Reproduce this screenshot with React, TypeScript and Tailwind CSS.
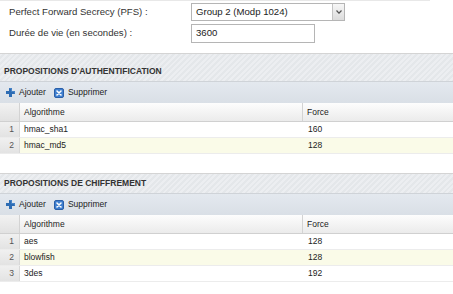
import React from 'react'

type Row = { algo: string; force: string }

const AUTH_ROWS: Row[] = [
  { algo: 'hmac_sha1', force: '160' },
  { algo: 'hmac_md5', force: '128' },
]

const CIPHER_ROWS: Row[] = [
  { algo: 'aes', force: '128' },
  { algo: 'blowfish', force: '128' },
  { algo: '3des', force: '192' },
]

function PlusIcon() {
  return (
    <svg width="9" height="9" viewBox="0 0 9 9">
      <path d="M3 0h3v3h3v3H6v3H3V6H0V3h3z" fill="#2e6db4" />
      <path d="M3.5 0.5h2v3h3v2" fill="none" stroke="#5b93d3" strokeWidth="0.6" />
    </svg>
  )
}

function DeleteIcon() {
  return (
    <svg width="10" height="10" viewBox="0 0 10 10">
      <rect x="0.5" y="0.5" width="9" height="9" rx="1.5" fill="#3f7fcf" stroke="#2a5fa8" />
      <path d="M3 3l4 4M7 3l-4 4" stroke="#fff" strokeWidth="1.6" strokeLinecap="round" />
    </svg>
  )
}

function Section({ title, rows, first }: { title: string; rows: Row[]; first?: boolean }) {
  return (
    <div className="w-full">
      {/* titre rayé */}
      <div
        className={`border-t border-b border-t-[#d4d4d4] border-b-[#cfd3d8] bg-[repeating-linear-gradient(135deg,#eceef1_0px,#eceef1_2px,#e4e7ea_2px,#e4e7ea_4px)] pl-[4px] text-[8.5px] font-bold leading-[12px] text-[#333] ${first ? 'h-[29px] pt-[11px]' : 'h-[21px] pt-[3px]'}`}
      >
        {title}
      </div>

      {/* barre d'outils */}
      <div className="flex h-[21px] items-center bg-gradient-to-b from-[#e4e9ef] to-[#d9dfe6] pl-[6px] text-[8.5px] text-[#222]">
        <span className="flex items-center gap-[4px]">
          <PlusIcon />
          Ajouter
        </span>
        <span className="ml-[8px] flex items-center gap-[4px]">
          <DeleteIcon />
          Supprimer
        </span>
      </div>

      {/* grille */}
      <div className="text-[8.5px] text-[#222]">
        <div className="flex h-[19px] border-b border-[#d0d0d0] bg-gradient-to-b from-[#fdfdfd] to-[#ebebeb]">
          <div className="w-[20px] border-r border-[#d3d3d3] bg-gradient-to-b from-[#f2f2f2] to-[#e2e2e2]" />
          <div className="flex w-[283px] items-center border-r border-[#d3d3d3] pl-[4px]">Algorithme</div>
          <div className="flex flex-1 items-center pl-[4px]">Force</div>
        </div>
        {rows.map((r, i) => (
          <div
            key={r.algo}
            className={`flex h-[16px] border-b border-[#ececec] ${i % 2 === 1 ? 'bg-[#fafbe8]' : 'bg-white'}`}
          >
            <div className="flex w-[20px] items-center justify-end border-r border-[#d8d8d8] bg-gradient-to-b from-[#f0f0f0] to-[#e3e3e3] pr-[5px] text-[#555]">
              {i + 1}
            </div>
            <div className="flex w-[283px] items-center pl-[4px]">{r.algo}</div>
            <div className="flex flex-1 items-center pl-[5px]">{r.force}</div>
          </div>
        ))}
      </div>
    </div>
  )
}

export default function App() {
  return (
    <div className="h-[294px] w-[453px] overflow-hidden bg-white font-['Liberation_Sans',Arial,sans-serif]">
      <div className="h-px w-[430px] bg-[#e8e8e8]" />

      {/* paramètres */}
      <div className="mt-[2px] flex flex-col gap-[3px] text-[9.6px] text-[#333]">
        <div className="flex items-center">
          <div className="w-[191px] pl-[9px]">Perfect Forward Secrecy (PFS) :</div>
          <div className="flex h-[18px] w-[154px] items-stretch border border-[#b5b5b5] bg-white">
            <div className="flex flex-1 items-center pl-[4px] text-[#222]">Group 2 (Modp 1024)</div>
            <div className="flex w-[12px] items-center justify-center border-l border-[#c4c4c4] bg-gradient-to-b from-[#f7f7f7] to-[#dcdcdc]">
              <svg width="6" height="4" viewBox="0 0 6 4">
                <path d="M0.5 0.5L3 3.2 5.5 0.5" fill="none" stroke="#555" strokeWidth="1.2" />
              </svg>
            </div>
          </div>
        </div>
        <div className="flex items-center">
          <div className="w-[191px] pl-[9px]">Durée de vie (en secondes) :</div>
          <div className="flex h-[19px] w-[124px] items-center border border-[#b5b5b5] bg-white pl-[4px] text-[#222]">
            3600
          </div>
        </div>
      </div>

      <div className="mt-[10px]">
        <Section title="PROPOSITIONS D'AUTHENTIFICATION" rows={AUTH_ROWS} first />
      </div>
      <div className="mt-[19px]">
        <Section title="PROPOSITIONS DE CHIFFREMENT" rows={CIPHER_ROWS} />
      </div>
    </div>
  )
}
